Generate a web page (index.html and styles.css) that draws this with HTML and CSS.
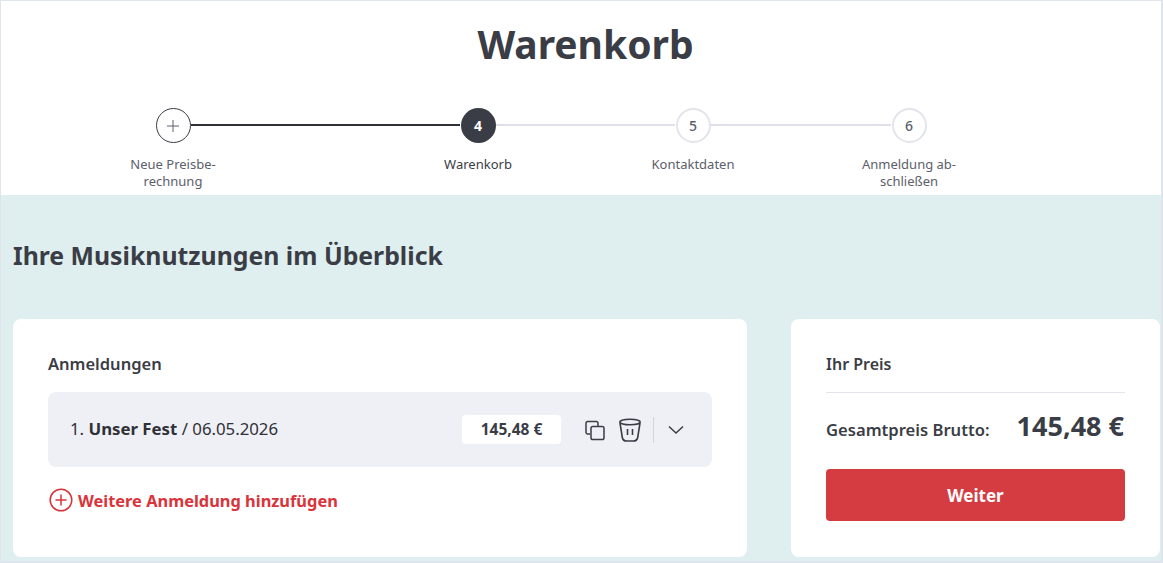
FILE: index.html
```html
<!DOCTYPE html>
<html lang="de">
<head>
    <meta charset="UTF-8">
    <title>Warenkorb</title>
    <link rel="stylesheet" href="styles.css">
</head>
<body>
    <div class="frame">
        <header class="top">
            <h1>Warenkorb</h1>
            <div class="stepper">
                <div class="step">
                    <span class="circle done">
                        <svg width="14" height="14" viewBox="0 0 14 14"><path d="M7 1v12M1 7h12" fill="none" stroke="#5c606b" stroke-width="1"/></svg>
                    </span>
                    <span class="step-label">Neue Preisbe-<br>rechnung</span>
                </div>
                <div class="line line-dark"></div>
                <div class="step">
                    <span class="circle active">4</span>
                    <span class="step-label step-label-active">Warenkorb</span>
                </div>
                <div class="line"></div>
                <div class="step">
                    <span class="circle">5</span>
                    <span class="step-label">Kontaktdaten</span>
                </div>
                <div class="line"></div>
                <div class="step">
                    <span class="circle">6</span>
                    <span class="step-label">Anmeldung ab-<br>schließen</span>
                </div>
            </div>
        </header>

        <main class="content">
            <h2>Ihre Musiknutzungen im Überblick</h2>
            <div class="cards">
                <section class="card card-left">
                    <h3 class="list-title">Anmeldungen</h3>
                    <div class="entry">
                        <div class="entry-name">1. <b>Unser Fest</b> / 06.05.2026</div>
                        <div class="entry-price">145,48 €</div>
                        <svg class="icon-copy" width="22" height="22" viewBox="0 0 22 22" fill="none" stroke="#3a3d45" stroke-width="1.5">
                            <path d="M6 15H3.8A1.8 1.8 0 0 1 2 13.2V4.3A1.8 1.8 0 0 1 3.800 2.500h8.400A1.800 1.800 0 0 1 14 4.300V7"/>
                            <rect x="7" y="7.500" width="13" height="13" rx="1.800"/>
                        </svg>
                        <svg class="icon-trash" width="24" height="26" viewBox="0 0 24 26" fill="none" stroke="#3a3d45" stroke-width="1.600">
                            <ellipse cx="12" cy="5" rx="10.200" ry="2.800"/>
                            <path d="M2 6l2.300 14.500c.4 2.500 2.700 3.500 4.700 3.500h6c2 0 4.300-1 4.700-3.500L22 6"/>
                            <path d="M9.500 12v6M14.500 12v6"/>
                        </svg>
                        <span class="divider"></span>
                        <svg class="icon-chevron" width="18" height="10" viewBox="0 0 18 10" fill="none" stroke="#3a3d45" stroke-width="1.500"><path d="M2 1.500l7 6.500 7-6.500"/></svg>
                    </div>
                    <a class="add-link" href="#">
                        <svg width="24" height="24" viewBox="0 0 24 24" fill="none" stroke="#d9343c" stroke-width="1.500"><circle cx="12" cy="12" r="10.800"/><path d="M12 6.500v11M6.500 12h11"/></svg>
                        Weitere Anmeldung hinzufügen
                    </a>
                </section>

                <aside class="card card-right">
                    <h3 class="price-title">Ihr Preis</h3>
                    <div class="price-row">
                        <span class="price-label">Gesamtpreis Brutto:</span>
                        <span class="price-value">145,48 €</span>
                    </div>
                    <button class="next-btn">Weiter</button>
                </aside>
            </div>
        </main>
    </div>
</body>
</html>
```

FILE: styles.css
```css
* {
    box-sizing: border-box;
    margin: 0;
    padding: 0;
}

html, body {
    height: 100%;
    overflow: hidden;
}

body {
    font-family: "Noto Sans", "Open Sans", Arial, sans-serif;
    color: #3a3d45;
    background: #fff;
}

.frame {
    height: 563px;
    border: 1px solid #e0e4ec;
    border-width: 1px 2px 2px 1px;
    display: flex;
    flex-direction: column;
}

.top {
    height: 194px;
    background: #fff;
}

h1 {
    text-align: center;
    font-size: 39px;
    line-height: 56px;
    font-weight: 700;
    padding-top: 15px;
    padding-left: 9px;
}

.stepper {
    display: grid;
    grid-template-columns: 110px 195px 110px 105px 110px 106px 110px;
    padding-left: 117px;
    margin-top: 36px;
}

.step {
    display: flex;
    flex-direction: column;
    align-items: center;
}

.circle {
    position: relative;
    z-index: 1;
    width: 35px;
    height: 35px;
    border-radius: 50%;
    border: 2px solid #e3e4ec;
    background: #fff;
    color: #5c606b;
    font-size: 14px;
    font-weight: 500;
    display: flex;
    align-items: center;
    justify-content: center;
}

.circle.done {
    border: 1px solid #3a3d45;
}

.circle.active {
    border: 0;
    background: #3a3d45;
    color: #fff;
    font-weight: 700;
}

.step-label {
    margin-top: 13px;
    font-size: 13px;
    line-height: 17px;
    text-align: center;
    color: #5c606b;
    white-space: nowrap;
}

.step-label-active {
    color: #3a3d45;
}

.line {
    height: 2px;
    margin: 16px -37px 0;
    background: #dedfe8;
}

.line-dark {
    background: #2f3137;
}

.content {
    flex: 1;
    background: #dfeeee;
    padding: 0 0 4px 12px;
    display: flex;
    flex-direction: column;
}

h2 {
    font-size: 24.8px;
    line-height: 32px;
    font-weight: 700;
    margin-top: 44px;
}

.cards {
    display: flex;
    gap: 44px;
    margin-top: 48px;
    flex: 1;
}

.card {
    background: #fff;
    border-radius: 8px;
    padding: 33px 35px 0;
}

.card-left {
    width: 734px;
}

.card-right {
    width: 369px;
}

h3 {
    font-size: 16px;
    line-height: 24px;
    font-weight: 600;
}

.list-title {
    font-size: 16.5px;
}

.entry {
    margin-top: 16px;
    height: 75px;
    width: 664px;
    background: #eff0f5;
    border-radius: 8px;
    padding: 0 27px 0 22px;
    display: flex;
    align-items: center;
}

.entry-name {
    flex: 1;
    font-size: 16.8px;
    color: #2f3137;
    padding-bottom: 2px;
}

.entry-price {
    width: 99px;
    height: 29px;
    line-height: 29px;
    margin-bottom: 1px;
    background: #fff;
    border-radius: 4px;
    text-align: center;
    font-size: 15.5px;
    font-weight: 700;
}

.icon-copy {
    margin-left: 23px;
}

.icon-trash {
    margin-left: 12px;
}

.divider {
    width: 1px;
    height: 26px;
    margin: 0 13px 0 11px;
    background: #d3d5dc;
}

.add-link {
    display: flex;
    align-items: center;
    gap: 5px;
    margin-top: 21px;
    padding-left: 1px;
    color: #d9343c;
    font-size: 16.4px;
    font-weight: 700;
    text-decoration: none;
}

.price-title {
    padding-bottom: 16px;
    border-bottom: 1px solid #e3e4ec;
}

.price-row {
    display: flex;
    justify-content: space-between;
    align-items: baseline;
    margin-top: 14px;
    padding-right: 1px;
}

.price-label {
    font-size: 16.6px;
    font-weight: 600;
}

.price-value {
    font-size: 27px;
    font-weight: 700;
}

.next-btn {
    display: block;
    width: 100%;
    height: 52px;
    margin-top: 25px;
    border: 0;
    border-radius: 4px;
    background: #d53c41;
    color: #fff;
    font-family: inherit;
    font-size: 17px;
    font-weight: 700;
}
```
